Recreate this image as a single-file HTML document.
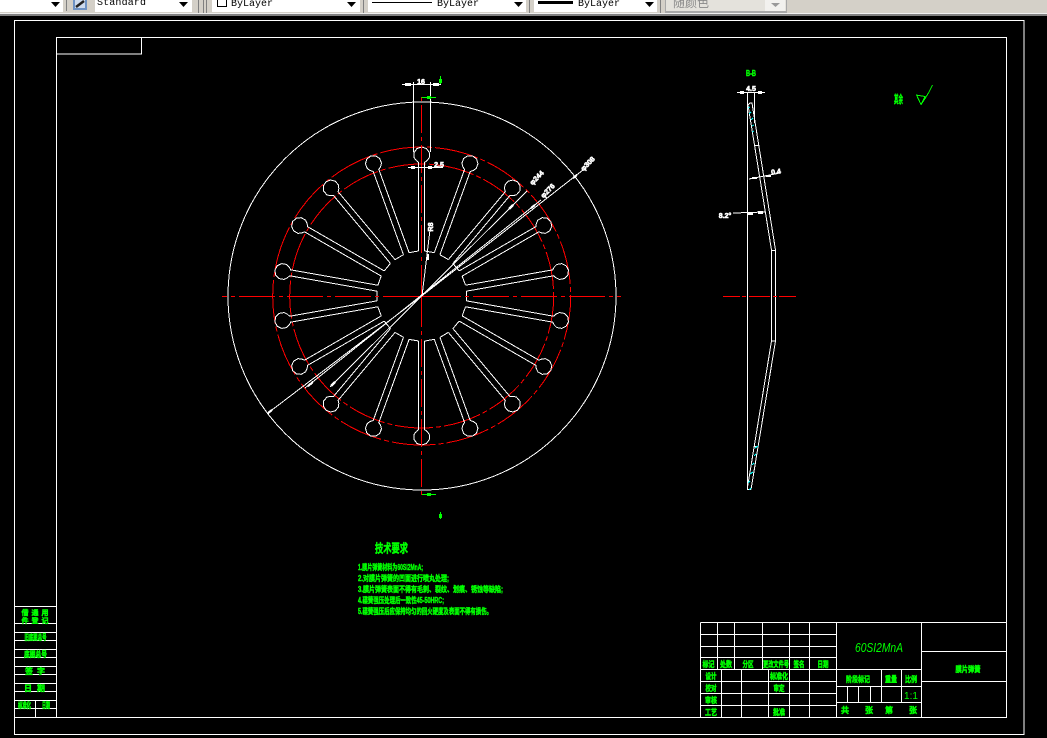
<!DOCTYPE html>
<html><head><meta charset="utf-8"><style>
html,body{margin:0;padding:0;background:#000;width:1047px;height:738px;overflow:hidden}
svg{display:block}
text{font-family:"Liberation Sans","Noto Sans CJK SC",sans-serif}
.g{fill:#0f0;stroke:#0f0;stroke-width:.5;font-size:8px;font-weight:700;text-anchor:middle}
.t{fill:#0f0;stroke:#0f0;stroke-width:.45;font-size:8px;font-weight:700}
.w{fill:#fff;stroke:#fff;stroke-width:.6;font-size:7px;font-weight:700;text-anchor:middle}
.m{font-family:"Liberation Mono",monospace;font-size:10px;fill:#000}
</style></head><body>
<svg xmlns="http://www.w3.org/2000/svg" width="1047" height="738" viewBox="0 0 1047 738">
<rect width="1047" height="738" fill="#000"/>
<!-- toolbar -->
<rect width="1047" height="16" fill="#d4d0c8"/>
<rect y="13" width="1047" height="1" fill="#f0f0f0"/>
<rect y="14" width="1047" height="2" fill="#808080"/>
<rect x="0" width="63" height="12" fill="#fff"/>
<rect x="95" width="97" height="12" fill="#fff"/>
<rect x="212" width="148" height="12" fill="#fff"/>
<rect x="368" width="158" height="12" fill="#fff"/>
<rect x="534" width="123" height="12" fill="#fff"/>
<rect x="665" width="122" height="13" fill="#a8a8a8"/>
<rect x="666" width="120" height="11" fill="#e4e2dc"/>
<rect x="765" width="20" height="11" fill="#f2f1ee"/>
<g fill="#808080">
<rect x="66" width="1" height="11"/><rect x="198" width="1" height="13"/><rect x="203" width="1" height="13"/><rect x="206" width="1" height="13"/>
<rect x="363" width="1" height="13"/><rect x="529" width="1" height="13"/><rect x="660" width="1" height="13"/>
</g>
<g fill="#000">
<polygon points="51,2 60,2 55.5,7"/>
<polygon points="179,2 188,2 183.5,7"/>
<polygon points="347,2 356,2 351.5,7"/>
<polygon points="514,2 523,2 518.5,7"/>
<polygon points="645,2 654,2 649.5,7"/>
</g>
<polygon points="771,3 780,3 775.5,7" fill="#999"/>
<rect x="73" y="0" width="14" height="10" fill="#6f93c4"/>
<rect x="75" y="0" width="10" height="8" fill="#cfdcee"/>
<path d="M76 7L84 1" stroke="#222" stroke-width="2.5"/>
<text class="m" x="97" y="5" textLength="49">Standard</text>
<rect x="217.5" y="-1" width="9" height="7.5" fill="#fff" stroke="#000"/>
<text class="m" x="231" y="6" textLength="42">ByLayer</text>
<rect x="372" y="2" width="60" height="1" fill="#000"/>
<text class="m" x="437" y="6" textLength="42">ByLayer</text>
<rect x="538" y="1" width="35" height="3" fill="#000"/>
<text class="m" x="578" y="6" textLength="42">ByLayer</text>
<text x="673" y="7" font-size="12" fill="#8a8a8a" textLength="36" style='font-family:"Noto Sans CJK SC",sans-serif'>随颜色</text>

<g shape-rendering="crispEdges" fill="none">
<!-- frames -->
<g stroke="#fff" stroke-width="1">
<rect x="14.5" y="20.5" width="1009.5" height="714"/>
<rect x="56.5" y="37.5" width="950" height="680"/>
<rect x="56.5" y="37.5" width="85" height="16.5"/>
<path d="M14.5 606.5H56.5M14.5 623.5H56.5M14.5 632.5H56.5M14.5 640.5H56.5M14.5 649.5H56.5M14.5 657.5H56.5M14.5 666.5H56.5M14.5 674.5H56.5M14.5 683.5H56.5M14.5 691.5H56.5M14.5 700.5H56.5M14.5 708.5H56.5M14.5 717.5H56.5M35.5 700.5V717.5"/>
<!-- title block -->
<path d="M700.5 622.5H1006.5M700.5 622.5V717.5M836.5 622.5V717.5M921.5 622.5V717.5"/>
<path d="M700.5 634.5H836.5M700.5 646.5H836.5M700.5 657.5H836.5M700.5 669.5H921.5M700.5 681.5H836.5M700.5 693.5H836.5M700.5 705.5H836.5"/>
<path d="M717.5 622.5V669.5M734.5 622.5V669.5M762.5 622.5V669.5M789.5 622.5V717.5M809.5 622.5V717.5"/>
<path d="M721.5 669.5V717.5M741.5 669.5V717.5M768.5 669.5V717.5"/>
<path d="M836.5 686.5H921.5M836.5 702.5H921.5M881.5 669.5V702.5M901.5 669.5V702.5M847.5 686.5V702.5M858.5 686.5V702.5M870.5 686.5V702.5"/>
<path d="M921.5 651.5H1006.5M921.5 681.5H1006.5"/>
</g>

<!-- main view -->
<defs>
<g id="f">
<path stroke="#fff" d="M-3 -45V-134M3 -45V-134M3 -45L12.5 -43.4"/>
<polyline stroke="#fff" points="-3,-133.6 -5.5,-135.5 -7.6,-138.5 -7.6,-143.5 -4.7,-147.5 0,-149 4.7,-147.5 7.6,-143.5 7.6,-138.5 5.5,-135.5 3,-133.6"/>
</g>
</defs>
<circle cx="422" cy="296" r="194" stroke="#fff"/>
<circle cx="421.7" cy="296" r="149" stroke="#f00" stroke-dasharray="44 3 5 3"/>
<circle cx="421.7" cy="296" r="132" stroke="#f00" stroke-dasharray="38 3 5 3"/>
<g transform="translate(421.7 296)">
<use href="#f"/>
<use href="#f" transform="rotate(20)"/>
<use href="#f" transform="rotate(40)"/>
<use href="#f" transform="rotate(60)"/>
<use href="#f" transform="rotate(80)"/>
<use href="#f" transform="rotate(100)"/>
<use href="#f" transform="rotate(120)"/>
<use href="#f" transform="rotate(140)"/>
<use href="#f" transform="rotate(160)"/>
<use href="#f" transform="rotate(180)"/>
<use href="#f" transform="rotate(200)"/>
<use href="#f" transform="rotate(220)"/>
<use href="#f" transform="rotate(240)"/>
<use href="#f" transform="rotate(260)"/>
<use href="#f" transform="rotate(280)"/>
<use href="#f" transform="rotate(300)"/>
<use href="#f" transform="rotate(320)"/>
<use href="#f" transform="rotate(340)"/>
</g>
<!-- red center lines -->
<g stroke="#f00">
<path d="M419 296.5H222" stroke-dasharray="36 4 4 4"/>
<path d="M425 296.5H621" stroke-dasharray="36 4 4 4"/>
<path d="M419 296.5H425"/>
<path d="M421.5 293V97" stroke-dasharray="28 4 4 4"/>
<path d="M421.5 299V498" stroke-dasharray="28 4 4 4"/>
<path d="M421.5 293V299"/>
</g>
<!-- dims -->
<g stroke="#fff">
<path d="M413.5 82V152M430.5 82V152M402 84.5H441"/>
<path d="M408 167.5H443"/>
<path d="M268 413L421.7 296L583 170"/>
<path d="M305 388L541 200"/>
<path d="M330 387L527 191"/>
<path d="M430 230L422 296"/>
</g>
<g fill="#fff">
<rect x="405" y="83" width="6" height="3"/><rect x="433" y="83" width="6" height="3"/>
<rect x="411" y="166" width="4" height="3"/><rect x="428" y="166" width="4" height="3"/>
<rect x="427" y="254" width="2" height="6"/>
</g>
<g stroke="#fff" stroke-width="2.2">
<path d="M268 413L272 410M573 178L577 175M308 386L313 382M531 208L535 205M331 386L335 382M509 209L513 205"/>
</g>
<!-- section marks -->
<g stroke="#0f0">
<path d="M421.7 97.5H436M422 494.5H436"/>
<path d="M440.5 76V84M440.5 512V519"/>
</g>
<rect x="427" y="96" width="4" height="3" fill="#0f0"/>
<rect x="427" y="493" width="4" height="3" fill="#0f0"/>
<rect x="439" y="79" width="3" height="4" fill="#0f0"/>
<rect x="439" y="514" width="3" height="4" fill="#0f0"/>

<!-- side view -->
<g stroke="#fff">
<path d="M747.5 92V489.5H751M754.5 92V123M737 92.5H765"/>
<polyline points="748,105 750,103 752,103 775.5,250 775.5,341 751,489.5"/>
<polyline points="748,105 771.5,250 771.5,341 747.7,486"/>
<path d="M754.5 145.5H758.5M771.5 250.5H775.5M771.5 341H775.5M754.5 446.5H758.5"/>
<path d="M749 179L780 173M733 213L765 212"/>
</g>
<g fill="#fff">
<rect x="740" y="91" width="4" height="3"/><rect x="758" y="91" width="4" height="3"/>
<rect x="752" y="177" width="5" height="2"/><rect x="766" y="175" width="5" height="2"/>
<rect x="748" y="212" width="5" height="3"/><rect x="758" y="211" width="5" height="3"/>
</g>
<g stroke="#0ff">
<path d="M748 108L750 107M749 114L751 112M751 120L753 118M752 126L754 125M752 132L754 131"/>
<path d="M749 490L751 488M748 483L750 481M750 474L753 472M752 465L754 463M754 456L756 454M755 448L758 446"/>
</g>
<g stroke="#f00"><path d="M723 296.5H740M742 296.5H746M749 296.5H770M773 296.5H777M779 296.5H796"/></g>
<!-- roughness check -->
<polyline stroke="#0f0" points="916,95 925,96.5 921,104.5 916.5,95"/>
<polyline stroke="#0f0" points="921,104.5 926,97 929,92 932.5,85"/>
</g>

<!-- white dim text -->
<text class="w" x="421" y="84">16</text>
<text class="w" x="439" y="167">2.5</text>
<text class="w" transform="translate(431 227) rotate(-90)" x="0" y="2">R8</text>
<text class="w" transform="translate(588 164) rotate(-45)" x="0" y="2">φ308</text>
<text class="w" transform="translate(548 191) rotate(-45)" x="0" y="2">φ276</text>
<text class="w" transform="translate(537 178) rotate(-45)" x="0" y="2">φ244</text>
<text class="w" x="751" y="91">4.5</text>
<text class="w" transform="translate(776 172) rotate(-8)" x="0" y="2">0.4</text>
<text class="w" x="725" y="218">8.2°</text>

<!-- green text -->
<text class="g" x="751" y="76" textLength="10" lengthAdjust="spacingAndGlyphs">B-B</text>
<text class="g" x="898.5" y="103" style="font-size:11px" textLength="9" lengthAdjust="spacingAndGlyphs">其余</text>
<text class="g" x="391.5" y="552.5" style="font-size:12px" textLength="33" lengthAdjust="spacingAndGlyphs">技术要求</text>
<text class="t" x="358" y="570" textLength="65" lengthAdjust="spacingAndGlyphs">1.膜片弹簧材料为60Si2MnA;</text>
<text class="t" x="358" y="581" textLength="91" lengthAdjust="spacingAndGlyphs">2.对膜片弹簧的凹面进行喷丸处理;</text>
<text class="t" x="358" y="592" textLength="145" lengthAdjust="spacingAndGlyphs">3.膜片弹簧表面不得有毛刺、裂纹、划痕、锈蚀等缺陷;</text>
<text class="t" x="358" y="603" textLength="86" lengthAdjust="spacingAndGlyphs">4.碟簧强压处理后一致性45-50HRC;</text>
<text class="t" x="358" y="614" textLength="134" lengthAdjust="spacingAndGlyphs">5.碟簧强压后应保持均匀的回火硬度及表面不得有损伤。</text>

<!-- left table -->
<g style="font-size:7px">
<text class="g" style="font-size:7px" x="25" y="615">借</text><text class="g" style="font-size:7px" x="35" y="615">通</text><text class="g" style="font-size:7px" x="45" y="615">用</text>
<text class="g" style="font-size:7px" x="25" y="623">件</text><text class="g" style="font-size:7px" x="35" y="623">登</text><text class="g" style="font-size:7px" x="45" y="623">记</text>
</g>
<text class="g" x="35.5" y="640" textLength="22" lengthAdjust="spacingAndGlyphs">旧底图总号</text>
<text class="g" x="35.5" y="657" textLength="23" lengthAdjust="spacingAndGlyphs">底图总号</text>
<text class="g" x="29" y="674">签</text><text class="g" x="41" y="674">字</text>
<text class="g" x="28" y="691">日</text><text class="g" x="41" y="691">期</text>
<text class="g" x="24.5" y="708" textLength="13" lengthAdjust="spacingAndGlyphs">标准化</text>
<text class="g" x="46" y="708" textLength="8" lengthAdjust="spacingAndGlyphs">日期</text>

<!-- title text -->
<text x="855" y="652" fill="#0f0" font-size="13" font-style="italic" textLength="48" lengthAdjust="spacingAndGlyphs" style='font-family:"Liberation Sans",sans-serif'>60SI2MnA</text>
<text class="g" x="968" y="672" textLength="25" lengthAdjust="spacingAndGlyphs">膜片弹簧</text>
<text class="g" x="708.5" y="667" textLength="12" lengthAdjust="spacingAndGlyphs">标记</text>
<text class="g" x="726" y="667" textLength="12" lengthAdjust="spacingAndGlyphs">处数</text>
<text class="g" x="748" y="667" textLength="11" lengthAdjust="spacingAndGlyphs">分区</text>
<text class="g" x="776" y="667" textLength="26" lengthAdjust="spacingAndGlyphs">更改文件号</text>
<text class="g" x="799" y="667" textLength="11" lengthAdjust="spacingAndGlyphs">签名</text>
<text class="g" x="823" y="667" textLength="11" lengthAdjust="spacingAndGlyphs">日期</text>
<text class="g" x="711" y="679" textLength="11" lengthAdjust="spacingAndGlyphs">设计</text>
<text class="g" x="779" y="679" textLength="18" lengthAdjust="spacingAndGlyphs">标准化</text>
<text class="g" x="711" y="691" textLength="11" lengthAdjust="spacingAndGlyphs">校对</text>
<text class="g" x="779" y="691" textLength="11" lengthAdjust="spacingAndGlyphs">审定</text>
<text class="g" x="711" y="703" textLength="12" lengthAdjust="spacingAndGlyphs">审核</text>
<text class="g" x="711" y="715" textLength="12" lengthAdjust="spacingAndGlyphs">工艺</text>
<text class="g" x="779" y="715" textLength="12" lengthAdjust="spacingAndGlyphs">批准</text>
<text class="g" x="858" y="682" textLength="24" lengthAdjust="spacingAndGlyphs">阶段标记</text>
<text class="g" x="891" y="682" textLength="12" lengthAdjust="spacingAndGlyphs">重量</text>
<text class="g" x="911" y="682" textLength="12" lengthAdjust="spacingAndGlyphs">比例</text>
<text x="911" y="699" fill="#0f0" font-size="10" text-anchor="middle">1:1</text>
<text class="g" x="845" y="713">共</text><text class="g" x="869" y="713">张</text><text class="g" x="889" y="713">第</text><text class="g" x="913" y="713">张</text>
</svg>
</body></html>
